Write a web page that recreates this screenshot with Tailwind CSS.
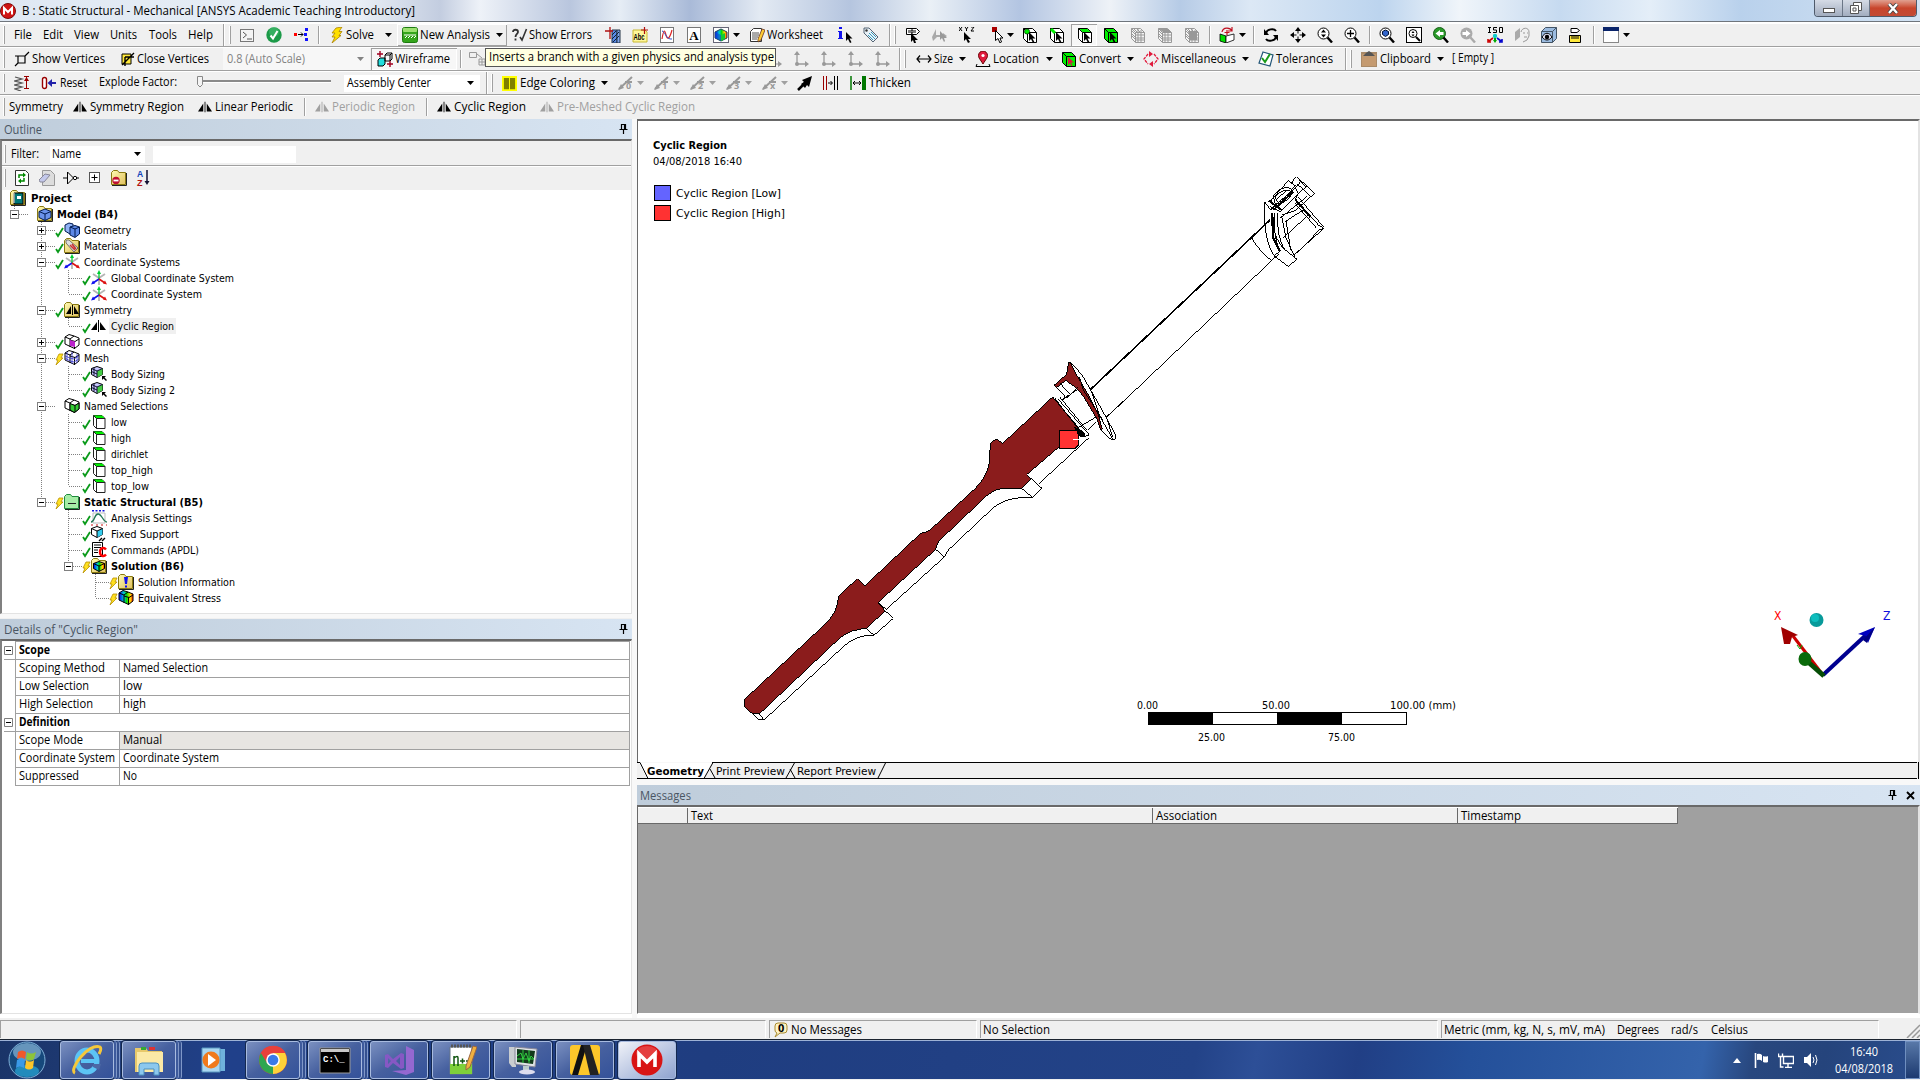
<!DOCTYPE html>
<html lang="en">
<head>
<meta charset="utf-8">
<title>B : Static Structural - Mechanical</title>
<script src="https://cdn.jsdelivr.net/npm/@tailwindcss/browser@4"></script>
</head>
<body class="w-[1920px] h-[1080px] overflow-hidden bg-[#f0f0f0] text-black font-['Open_Sans','Noto_Sans',sans-serif] text-[12px] leading-4">

<svg class="absolute size-0">
  <linearGradient id="gold" x1="0" y1="0" x2="1" y2="1"><stop offset="0" stop-color="#fffbb0"/><stop offset="1" stop-color="#e0c060"/></linearGradient>
  <linearGradient id="rain" x1="0" y1="0" x2="1" y2="0"><stop offset="0" stop-color="#00f"/><stop offset=".35" stop-color="#0cc"/><stop offset=".55" stop-color="#0d0"/><stop offset=".8" stop-color="#fd0"/><stop offset="1" stop-color="#f20"/></linearGradient>
  <symbol id="cur" viewBox="0 0 16 16"><path d="M8 5v9l2-2 2 4 1.500-.7-2-3.800h3z"/></symbol>
  <symbol id="m" viewBox="0 0 16 16"><circle cx="8" cy="8" r="7.500" fill="#d01515" stroke="#7c0d0d"/><path d="M4 11.500V5l4 4 4-4v6.500" fill="none" stroke="#fff" stroke-width="2"/></symbol>
  <symbol id="cmd" viewBox="0 0 16 16"><rect x="1.500" y="2.500" width="13" height="12" fill="#f4f4f4" stroke="#777"/><path d="M4 5l3.500 3L4 11M8 12h5" fill="none" stroke="#555"/></symbol>
  <symbol id="ok" viewBox="0 0 16 16"><circle cx="8" cy="8" r="7.700" fill="#1c9a48"/><circle cx="8" cy="5" r="5" fill="#4fc47a" opacity=".5"/><path d="M4.500 8.500l2.500 3L11.500 4" fill="none" stroke="#fff" stroke-width="2"/></symbol>
  <symbol id="nodes" viewBox="0 0 16 16"><path d="M1 6h3v3H1z" fill="#f00"/><path d="M5 7.500h5M8 5.500l2 2-2 2" stroke="#000" fill="none"/><path d="M12 1h3v3h-3zM11 6h3v3h-3zM12 11h3v3h-3z" fill="#11f"/></symbol>
  <symbol id="bolt" viewBox="0 0 16 16"><path d="M7 1l6-1-3 4.500h3l-3 4h2L3 16l3-6H3l3-4H3z" fill="#ffe000" stroke="#a88000" stroke-width=".8"/></symbol>
  <symbol id="newan" viewBox="0 0 16 16"><rect x=".5" y=".5" width="15" height="15" rx="2" fill="#34a51c" stroke="#1d7a10"/><rect x="1" y="1" width="14" height="4" rx="1" fill="#9be070"/><path d="M2 8h12" stroke="#fff"/><path d="M3 11l2-2M6 11l2-2M9 11l2-2M12 11l2-2" stroke="#fff"/></symbol>
  <symbol id="errs" viewBox="0 0 16 16"><path d="M1 5c0-3 5-3 5 0 0 2-2.500 2-2.500 5M3.500 11.500v2" fill="none" stroke="#333" stroke-width="1.800"/><path d="M8 10l2 3 4.500-11" fill="none" stroke="#333" stroke-width="1.600"/></symbol>
  <symbol id="sect" viewBox="0 0 16 16"><path d="M7 3h5v13H7z" fill="#5a8be8" stroke="#234"/><path d="M12 3h3v13h-3z" fill="#7fa6ee" stroke="#234"/><path d="M7 8l4-4M7 12l7-7M8 15l6-6" stroke="#123"/><path d="M0 4h8M5 0v12" stroke="#b01010" stroke-width="1.300"/></symbol>
  <symbol id="abc" viewBox="0 0 16 16"><path d="M1 3h12l2 2v10H1z" fill="#fff79a" stroke="#c8b830"/><text x="1.500" y="13" font-size="8.500" font-weight="700" textLength="11" font-family="Liberation Sans">Abc</text><path d="M9 3h7M12.500 0v7" stroke="#b01010" stroke-width="1.200"/></symbol>
  <symbol id="chart" viewBox="0 0 16 16"><rect x="1.500" y=".5" width="13" height="15" fill="#fff" stroke="#777"/><path d="M3 12C5 0 6 4 7 8s3 6 6-5" fill="none" stroke="#d22" stroke-width="1.200"/><path d="M3 4c3 0 4 9 10 8" fill="none" stroke="#35c"/></symbol>
  <symbol id="atext" viewBox="0 0 16 16"><rect x="1.500" y=".5" width="13" height="15" fill="#fff" stroke="#777"/><text x="8" y="13" text-anchor="middle" font-size="13" font-weight="700" font-family="Liberation Serif">A</text></symbol>
  <symbol id="color" viewBox="0 0 16 16"><rect x=".5" y=".5" width="15" height="15" fill="#fff" stroke="#667"/><path d="M8 2l6 3v6l-6 3-6-3V5z" fill="url(#rain)" stroke="#245"/><path d="M8 8v6l-6-3V5z" fill="#14c" opacity=".6"/><path d="M8 8v6l4-2V6z" fill="#1c3"/></symbol>
  <symbol id="sheet" viewBox="0 0 16 16"><path d="M1.500 4.500l3-3h8v13h-11z" fill="#fff" stroke="#333"/><path d="M3 6h7M3 8h7M3 10h6M3 12h5" stroke="#555"/><path d="M9 12l4-10 3 1-4 10-3 2z" fill="#fc3" stroke="#632" stroke-width=".8"/></symbol>
  <symbol id="info" viewBox="0 0 16 16"><path d="M2 0h3v2H2zM1 4h4v7h1v1H1v-1h1V5H1z" fill="#11e"/><use href="#cur" x="1" y="0"/></symbol>
  <symbol id="tag" viewBox="0 0 16 16"><path d="M1 1l5 0 9 9-5 5L1 6z" fill="#e8f0f6" stroke="#456" stroke-width=".9"/><path d="M6 6l6 6M8 5l5 5M5 8l5 5" stroke="#39b"/><circle cx="3.500" cy="3.500" r="1.200" fill="#333"/></symbol>
  <symbol id="lab" viewBox="0 0 16 16"><path d="M1.500 1.500h10l3 3-3 3h-10z" fill="#fff" stroke="#000"/><path d="M4 3v3M10 3v3M6 3h2v3H6z" stroke="#000" fill="none"/><path d="M6 6v9l2-2 1 3h2l-1-3h3z"/></symbol>
  <symbol id="gcur" viewBox="0 0 16 16"><path d="M0 10l4-8v6h7V6l4 3-4 3v-2H5l-4 4z" fill="#aaa"/><path d="M8 4v9l2-2 2 4 1-1-1-3h3z" fill="#999"/></symbol>
  <symbol id="xyz" viewBox="0 0 16 16"><path d="M0 0l3 4M3 0L0 4M6 0l1.500 2L9 0M7.500 2v2M12 0h3l-3 4h3" stroke="#000" fill="none"/><path d="M5 5v9l2-2 2 4 2-1-2-3h3z"/></symbol>
  <symbol id="rcur" viewBox="0 0 16 16"><path d="M1 0h5v5H1z" fill="#a00"/><path d="M4.500 3.500v10l2.500-2 2 4.500 1.500-1-1.500-4h3z" fill="#fff" stroke="#000"/></symbol>
  <symbol id="cube" viewBox="0 0 16 16"><path d="M1.500 1.500h9l4 4v10H5.500l-4-4z" fill="#fff" stroke="#000"/><path d="M1.500 1.500l4 4v10M5.500 5.500h9" stroke="#000" fill="none"/></symbol>
  <symbol id="cv" viewBox="0 0 16 16"><use href="#cube"/><circle cx="5" cy="4.500" r="2.600" fill="#0e0" stroke="#000" stroke-width=".6"/><use href="#cur" x="-1"/></symbol>
  <symbol id="ce" viewBox="0 0 16 16"><use href="#cube"/><path d="M2 2l4 4" stroke="#0e0" stroke-width="3"/><use href="#cur" x="-1"/></symbol>
  <symbol id="cf" viewBox="0 0 16 16"><use href="#cube"/><path d="M2.500 2h8l3 3H5.500z" fill="#0e0"/><use href="#cur" x="-1"/></symbol>
  <symbol id="cb" viewBox="0 0 16 16"><path d="M1.500 1.500h9l4 4v10H5.500l-4-4z" fill="#0e0" stroke="#000"/><path d="M1.500 1.500l4 4v10M5.500 5.500h9" stroke="#000" fill="none"/><use href="#cur" x="-1"/></symbol>
  <symbol id="cc" viewBox="0 0 16 16"><path d="M1.500 1.500h9l4 4v10H5.500l-4-4z" fill="#0e0" stroke="#000"/><path d="M1.500 1.500l4 4v10M5.500 5.500h9" stroke="#000" fill="none"/><path d="M7 6v8l2-2 1.500 3 1-.5-1.500-3h3z" fill="#e01040"/></symbol>
  <symbol id="gm" viewBox="0 0 16 16"><path d="M1.500 1.500h9l4 4v10H5.500l-4-4z" fill="#f4f4f4" stroke="#999"/><path d="M1.500 1.500l4 4v10M5.500 5.500h9M2 4l4 4h9M2 7l4 4h9M2 9l4 4h9M8 2v13M11 3v12M4 2l4 4M7 2l4 4" stroke="#999" fill="none"/></symbol>
  <symbol id="gm2" viewBox="0 0 16 16"><use href="#gm"/><path d="M2 2h9l3 3H6z" fill="#999"/></symbol>
  <symbol id="gm3" viewBox="0 0 16 16"><use href="#gm"/><path d="M4 4h9v9H6z" fill="#999"/></symbol>
  <symbol id="rcube" viewBox="0 0 16 16"><path d="M1 7l6 2v7l-6-2z" fill="#0d0" stroke="#000" stroke-width=".8"/><path d="M7 9l8-2v6l-8 3z" fill="#fff" stroke="#000" stroke-width=".8"/><path d="M3 5c1-5 8-5 10-1M13 0v4H9M8 3v5M5.500 5.500h5" stroke="#c01020" stroke-width="1.200" fill="none"/></symbol>
  <symbol id="rot" viewBox="0 0 16 16"><path d="M3 6c1-4 8-5 10-2M13 10c-1 4-8 5-10 2" stroke="#000" stroke-width="2" fill="none"/><path d="M1 2v6h5zM15 14V8h-5z"/></symbol>
  <symbol id="pan" viewBox="0 0 16 16"><path d="M8 3v3.500M8 9.500V13M3 8h3.500M9.500 8H13" stroke="#000"/><path d="M8 0l3 4H5zM8 16l3-4H5zM0 8l4-3v6zM16 8l-4-3v6z"/></symbol>
  <symbol id="lens" viewBox="0 0 16 16"><circle cx="6.500" cy="6.500" r="5.500" fill="#fff" stroke="#000"/><path d="M10.500 10.500l4.500 5" stroke="#000" stroke-width="2.400"/></symbol>
  <symbol id="z1" viewBox="0 0 16 16"><use href="#lens"/><path d="M6.500 2.500L9 5.500H4zM6.500 10.500L9 7.500H4z"/></symbol>
  <symbol id="z2" viewBox="0 0 16 16"><use href="#lens"/><path d="M3 6.500h7M6.500 3v7" stroke="#000" stroke-width="1.300"/></symbol>
  <symbol id="z3" viewBox="0 0 16 16"><use href="#lens"/><path d="M6.500 3l3 1.500v3l-3 2-3-2v-3z" fill="#36c" stroke="#013"/></symbol>
  <symbol id="z4" viewBox="0 0 16 16"><rect x=".5" y=".5" width="15" height="15" fill="#fff" stroke="#000"/><circle cx="7" cy="6.500" r="4" fill="none" stroke="#000"/><path d="M10 10l4 4" stroke="#000" stroke-width="2"/><path d="M7 4l1.500 2h-3zM7 9.500l1.500-2h-3z"/></symbol>
  <symbol id="z5" viewBox="0 0 16 16"><circle cx="6.500" cy="6.500" r="6" fill="#2a9a2a" stroke="#176017"/><path d="M10.500 10.500l4.500 5" stroke="#000" stroke-width="2.400"/><path d="M2.500 6.500L7 3v2h3.500v3H7v2z" fill="#fff"/></symbol>
  <symbol id="z6" viewBox="0 0 16 16"><circle cx="6.500" cy="6.500" r="6" fill="#aaa"/><path d="M10.500 10.500l4.500 5" stroke="#aaa" stroke-width="2.400"/><path d="M10.500 6.500L6 3v2H2.500v3H6v2z" fill="#fff"/></symbol>
  <symbol id="iso" viewBox="0 0 16 16"><path d="M1 .5h3M2.500 1v4M1 5.500h3M10 .500H6.500v2.500h3v2.500H6M12.500 .5h3v5h-3z" stroke="#000" fill="none"/><path d="M8 9v5" stroke="#0a0" stroke-width="2"/><circle cx="8" cy="9" r="2.200" fill="#1cc"/><path d="M2 14l4-3M1 12v3h3" stroke="#c00" stroke-width="1.600" fill="none"/><path d="M14 14l-4-3M15 12v3h-3" stroke="#00c" stroke-width="1.600" fill="none"/><path d="M6 13h4l-2 3z" fill="#0a0"/></symbol>
  <symbol id="face" viewBox="0 0 16 16"><path d="M1 14V5l5-4v9z" fill="#aaa"/><path d="M7 5c1-5 8-5 8 0v4l-2 4-4 2M9 6h2M13 6h1M10 10h3" fill="none" stroke="#999"/></symbol>
  <symbol id="eye" viewBox="0 0 16 16"><path d="M.5 4.500l4-4h11v11l-4 4H.5z" fill="#9bbbe0" stroke="#456"/><path d="M.5 4.500h11v11M11.500 4.500l4-4" fill="none" stroke="#456"/><path d="M1 10c3-5 7-5 10 0-3 4-7 4-10 0z" fill="#dde" stroke="#000"/><circle cx="6" cy="10" r="2.200"/></symbol>
  <symbol id="rule" viewBox="0 0 16 16"><path d="M4 1.500h6l2.500 2-2.500 2H4z" fill="#fff" stroke="#000"/><path d="M2.500 8.500h11v7h-11z" fill="#ffe93a" stroke="#000"/><path d="M5 9v3M7 9v3M9 9v3M11 9v3" stroke="#000"/></symbol>
  <symbol id="win" viewBox="0 0 16 16"><rect x=".5" y=".5" width="15" height="15" fill="#fff" stroke="#888"/><path d="M0 0h16v4H0z" fill="#0a246a"/></symbol>
  <symbol id="sv" viewBox="0 0 16 16"><path d="M4 5h7v7H4zM11 5l4-4M4 12l-3 3M4 5H1" fill="none" stroke="#000" stroke-width="1.200"/></symbol>
  <symbol id="clv" viewBox="0 0 16 16"><path d="M3 3h9v10H3z" fill="#ffe93a" stroke="#000"/><path d="M6 6h9M6 6v9M15 2L3 14" stroke="#000" stroke-width="1.400" fill="none"/></symbol>
  <symbol id="wire" viewBox="0 0 16 16"><path d="M1 9l2-2h5v6l-2 2H1z" fill="#2dd" stroke="#000"/><path d="M8 4l2-2h5v6l-2 2H8zM8 4h5v6M13 4l2-2" fill="none" stroke="#000"/><path d="M0 3h6M3 0v6M10 13h6M13 10v6" stroke="#a00020" stroke-width="1.400"/></symbol>
  <symbol id="gbox" viewBox="0 0 16 16"><path d="M.5 1.500h7v5h-7zM10 8h6v6h-6zM13 8v6M10 11h6M8 3l5 4" fill="none" stroke="#999"/></symbol>
  <symbol id="gax" viewBox="0 0 16 16"><path d="M4 2v11h9" fill="none" stroke="#999" stroke-width="1.300"/><path d="M4 0l3 4H1zM16 13l-4-3v6z" fill="#999"/><circle cx="4" cy="13" r="2" fill="#999"/></symbol>
  <symbol id="garr" viewBox="0 0 16 16"><path d="M9 13h5" stroke="#999"/><path d="M16 13l-4-3v6z" fill="#999"/></symbol>
  <symbol id="size" viewBox="0 0 16 16"><path d="M1 8h14M4 4.500L1 8l3 3.500M12 4.500L15 8l-3 3.500" fill="none" stroke="#000" stroke-width="1.200"/></symbol>
  <symbol id="loc" viewBox="0 0 16 16"><path d="M8 13C5 8 3.500 7 3.500 4.500a4.500 4.500 0 0 1 9 0C12.500 7 11 8 8 13z" fill="#e01a3c" stroke="#600"/><circle cx="8" cy="4.500" r="1.600" fill="#fff"/><path d="M2 13l-1 2.500h14L14 13" fill="none" stroke="#000"/></symbol>
  <symbol id="misc" viewBox="0 0 16 16"><path d="M5 3L1 8l4 5M11 3l4 5-4 5" fill="none" stroke="#e01a3c" stroke-width="1.300" stroke-dasharray="3 1"/><path d="M6 0l4 3-4 3zM10 10l-4 3 4 3z" fill="#e01a3c"/></symbol>
  <symbol id="tol" viewBox="0 0 16 16"><path d="M5 1l10 3-3 11L1 12z" fill="#fff" stroke="#257" stroke-width="1.200"/><path d="M4 7l3 4 5-8" fill="none" stroke="#1a9a1a" stroke-width="2"/></symbol>
  <symbol id="clip" viewBox="0 0 16 16"><path d="M0 1h16v15H0z" fill="#a98a68"/><path d="M1 3h14v12H1z" fill="#c49a70"/><path d="M2 5l3-3 3-2 3 2 3 3z" fill="#555"/></symbol>
  <symbol id="spring" viewBox="0 0 16 16"><path d="M1 2l7 2-7 2 7 2-7 2 7 2-7 2 6 2" fill="none" stroke="#555" stroke-width="1.300"/><path d="M12.500 2v11M10 1.500h5M10 13.500h5" stroke="#900"/><path d="M12.500 2l2.500 4h-5z" fill="#900"/></symbol>
  <symbol id="reset" viewBox="0 0 16 16"><rect x="1.500" y="2.500" width="4" height="11" rx="2" fill="#fff" stroke="#900" stroke-width="1.400"/><path d="M9 8h6" stroke="#22a" stroke-width="2"/><path d="M6.500 8L11 4v8z" fill="#22a"/></symbol>
  <symbol id="ec" viewBox="0 0 16 16"><path d="M0 0h16v16H0z" fill="#ff0"/><path d="M2 2h5.500v12H2zM8.500 2H14v12H8.500z" fill="#808000"/></symbol>
  <symbol id="sl" viewBox="0 0 16 16"><path d="M1 14L14 2" stroke="#999" stroke-width="2"/><path d="M0 15l6-2-3-4zM7 6h7v2H7z" fill="#999"/></symbol>
  <symbol id="pin2" viewBox="0 0 16 16"><path d="M1 15L9 7" stroke="#000" stroke-width="2.500"/><path d="M15 1L5 5l2 2-3 2 4 4 2-3 2 2z"/></symbol>
  <symbol id="vv" viewBox="0 0 16 16"><path d="M1.500 1v14M4.500 1v14" stroke="#900"/><path d="M6 8h4M8.500 6l2 2-2 2M12.500 1v14M15.500 1v14" stroke="#000" fill="none"/></symbol>
  <symbol id="thk" viewBox="0 0 16 16"><path d="M1 1v14" stroke="#070" stroke-width="1.500"/><path d="M12 1h4v14h-4z" fill="#070"/><path d="M3 8h8M5 6L3 8l2 2M9 6l2 2-2 2" stroke="#000" fill="none"/></symbol>
  <symbol id="sym" viewBox="0 0 16 16"><path d="M6 4v9H0zM10 4v9h6z" fill="currentColor"/><path d="M8 2v12" stroke="currentColor"/></symbol>
  <symbol id="refresh" viewBox="0 0 16 16"><path d="M1.500.500h10l3 3v12h-13z" fill="#fff" stroke="#333"/><path d="M5 8V5h5M10 8v3H5" fill="none" stroke="#080" stroke-width="1.500"/><path d="M9 2.500L12 5 9 7.500zM7 8.500L4 11l3 2.500z" fill="#080"/></symbol>
  <symbol id="erase" viewBox="0 0 16 16"><path d="M3.500.500h8l4 4v11h-12z" fill="#ddd" stroke="#999"/><path d="M0 10l6-6 5 1-6 7H1z" fill="#c3c8ea" stroke="#889"/></symbol>
  <symbol id="gate" viewBox="0 0 16 16"><path d="M0 8h4M13 8h3M4.500 2v12l6-6z" fill="none" stroke="#000"/><circle cx="12" cy="8" r="1.700" fill="#fff" stroke="#000"/></symbol>
  <symbol id="plus" viewBox="0 0 16 16"><rect x="3.500" y="2.500" width="10" height="10" fill="#fff" stroke="#555"/><path d="M5.500 7.500h6M8.500 4.500v6" stroke="#000"/></symbol>
  <symbol id="fold" viewBox="0 0 16 16"><path d="M.5 14.500v-12l2-2h4l1.500 2h6.500v12z" fill="url(#gold)" stroke="#8a7a10"/><path d="M1 15.500h14.500V3" stroke="#222" fill="none"/></symbol>
  <symbol id="fstop" viewBox="0 0 16 16"><use href="#fold"/><circle cx="5" cy="10.500" r="3.700" fill="#c01030"/><path d="M2.500 10.500h5" stroke="#fff" stroke-width="1.800"/></symbol>
  <symbol id="az" viewBox="0 0 16 16"><text x="1" y="7" font-size="8.500" font-weight="700" fill="#14b" font-family="Liberation Sans">A</text><text x="1" y="15.500" font-size="9" font-weight="700" fill="#b01010" font-family="Liberation Sans">Z</text><path d="M11 0v12" stroke="#113" stroke-width="1.500"/><path d="M8.500 11h5L11 15z" fill="#113"/></symbol>
  <symbol id="t-proj" viewBox="0 0 16 16"><use href="#fold"/><path d="M4 3h9v11H4z" fill="#077" stroke="#000"/><path d="M7 6h4v3H7z" fill="#fff"/><path d="M3 4h2M3 6h2M3 8h2M3 10h2M3 12h2" stroke="#fff"/></symbol>
  <symbol id="bc" viewBox="0 0 16 16"><path d="M8 3l6 2.500v6L8 14.500 2 11.500v-6z" fill="#6b93ea" stroke="#001a50"/><path d="M2 5.500L8 8l6-2.500M8 8v6.500" fill="none" stroke="#001a50"/></symbol>
  <symbol id="t-model" viewBox="0 0 16 16"><use href="#fold"/><use href="#bc"/></symbol>
  <symbol id="t-geo" viewBox="0 0 16 16"><path d="M1 3l4-2 4 1v8l-3 2-5-3z" fill="#8fb2f5" stroke="#001a50"/><path d="M6 5l5-1.500L15.500 5v7L11 15.500 6 13z" fill="#5d88e6" stroke="#001a50"/><path d="M6 5l5 2 4.500-2M11 7v8" fill="none" stroke="#001a50"/></symbol>
  <symbol id="t-mat" viewBox="0 0 16 16"><use href="#fold"/><path d="M2 2l3 0 9 8-4 4-8-9z" fill="#ddd" stroke="#444" stroke-width=".7"/><path d="M6 7l5 5M8 6l4 5" stroke="#c33" stroke-width="1.500"/></symbol>
  <symbol id="t-cs" viewBox="0 0 16 16"><path d="M8 8L2 4M8 8l6-4M8 8v7" stroke="#b5b5b5" stroke-width="1.800"/><path d="M8 9V2" stroke="#0c3" stroke-width="1.300"/><path d="M8 0l2 4H6z" fill="#0c3"/><path d="M8 9l-6 4" stroke="#11e" stroke-width="1.600"/><path d="M0 14.500l2-4 2 3z" fill="#11e"/><path d="M8 9l6 4" stroke="#d11" stroke-width="1.600"/><path d="M16 14.500l-2-4-2 3z" fill="#d11"/></symbol>
  <symbol id="t-symf" viewBox="0 0 16 16"><use href="#fold"/><path d="M7 4v8H2zM10 4v8h5zM8 3h1v10H8z"/></symbol>
  <symbol id="t-sym" viewBox="0 0 16 16"><path d="M6 4v8H0zM9 4v8h6z"/><path d="M7.500 2v12" stroke="#000"/></symbol>
  <symbol id="wc" viewBox="0 0 16 16"><path d="M1 3l4-2.500 5 1.500 5 2v7l-4.500 3.500L1 10z" fill="#fff" stroke="#000"/><path d="M1 3l5 2 4-3M6 5v8M6 6l5 1.500L15 5M10.500 7v8" fill="none" stroke="#000"/></symbol>
  <symbol id="t-con" viewBox="0 0 16 16"><use href="#wc"/><path d="M6 6l5 1.500V13L6 12z" fill="#b2c"/></symbol>
  <symbol id="t-mesh" viewBox="0 0 16 16"><use href="#wc"/><path d="M1 6l5 2 4 1 5-3M1 8l5 3 4 1 5-3M3 2v9M8 2v12M13 4v9" stroke="#33c" stroke-width=".8" fill="none"/></symbol>
  <symbol id="t-size" viewBox="0 0 16 16"><path d="M6 .5l5.500 2v6L6 11.500.500 8.500v-6z" fill="#c8c8ff" stroke="#000"/><path d="M6 5l5.500-2.500v6L6 11.500z" fill="#4c4"/><path d="M.5 2.500L6 5l5.500-2.500M6 5v6.500M.5 5.500L6 8M3 1.500v8" fill="none" stroke="#113"/><path d="M11 10h4l-1.500 1.500L16 14l-1 1-2.500-2.500L11 14z"/></symbol>
  <symbol id="t-ns" viewBox="0 0 16 16"><use href="#wc"/><path d="M6 5.500l5 2L15 5v6l-4.500 3.500L6 12z" fill="#3c3" stroke="#000"/><path d="M11 8v6" stroke="#000"/></symbol>
  <symbol id="t-face" viewBox="0 0 16 16"><path d="M2.500 1.500h8.500l3 3v10H5.500l-3-3z" fill="#fff" stroke="#222"/><path d="M2.500 1.500h8.500l3 3H5.500z" fill="#0e0"/><path d="M2.500 1.500l3 3v10M5.500 4.500h8.500" stroke="#222" fill="none"/></symbol>
  <symbol id="t-ss" viewBox="0 0 16 16"><path d="M.5 14.500v-12l2-2h4l1.500 2h6.500v12z" fill="#a6eda6" stroke="#1f8a3c"/><path d="M1 15.500h14.500V3M4 9.500h8" stroke="#222" fill="none"/></symbol>
  <symbol id="t-as" viewBox="0 0 16 16"><path d="M2 3h12v10H2z" fill="#fff" stroke="#bbb"/><path d="M0 12c4 0 3-8 7-8s5 8 9 8" fill="none" stroke="#275" stroke-width="1.300"/><path d="M1 .8h14" stroke="#11d" stroke-dasharray="2 1.500" stroke-width="1.500"/><path d="M0 15h16" stroke="#c11" stroke-dasharray="2 3"/></symbol>
  <symbol id="t-fix" viewBox="0 0 16 16"><path d="M6 .5l5.500 2v6L6 11.500.500 8.500v-6z" fill="#fff" stroke="#000"/><path d="M6 5l5.500-2.500v6L6 11.500z" fill="#3ce"/><path d="M.5 2.500L6 5l5.500-2.500M6 5v6.500" fill="none" stroke="#000"/><path d="M8 15l3-3M11 15l3-3" stroke="#000" stroke-width="1.400"/></symbol>
  <symbol id="t-cmd" viewBox="0 0 16 16"><path d="M1.500.500h10v14h-10z" fill="#fff" stroke="#000"/><path d="M3 3h7M3 5.500h7M3 8h4M3 10.500h4" stroke="#000"/><path d="M15 7.500c-2-2.500-6-2-6 2.500s4 5 6 2.500" fill="none" stroke="#f00" stroke-width="2.400"/></symbol>
  <symbol id="t-sol" viewBox="0 0 16 16"><use href="#fold"/><path d="M8 3.500l5.500 2v5L8 13.500 2.500 10.500v-5z" fill="url(#rain)" stroke="#000"/><path d="M2.500 5.500L8 8l5.500-2.500M8 8v5.500" fill="none" stroke="#000"/></symbol>
  <symbol id="t-inf" viewBox="0 0 16 16"><use href="#fold"/><path d="M6 3h4L9 10H7zM7 11.500h2v2H7z" fill="#11e"/></symbol>
  <symbol id="t-eq" viewBox="0 0 16 16"><path d="M1 3l4-2.500 5 1.500 5 2v7l-4.500 3.500L1 10z" fill="url(#rain)" stroke="#000"/><path d="M1 3l5 2 4-3M6 5v8M6 6l5 1.500L15 5M10.500 7v8" fill="none" stroke="#000"/></symbol>
  <symbol id="tack" viewBox="0 0 10 12"><path d="M2.500 1.500h4v5h-4zM5.500 1.500v5M.5 6.500h8M4.500 7v4" fill="none" stroke="#000" stroke-width="1.200"/></symbol>
</svg>

<div class="flex flex-col h-full">
  <!-- title bar -->
  <header class="h-[23px] flex-none flex items-start justify-between border-b border-b-white bg-[linear-gradient(90deg,#dfe8f3_0,#e9eff6_360px,#c3cde0_440px,#eef2f8_480px,#b9c6de_570px,#e6edf5_620px,#a9bad8_690px,#e3eaf3_760px,#b5c5df_850px,#eaf0f6_930px,#b3c5e2_1020px,#eef2f7_1110px,#b6cbe6_1180px,#dce8f5_1250px,#bcd4ee_1380px,#f0f5fa_1460px,#c6daf0_1560px,#e4eef8_1650px,#b9d1ec_1740px,#d3e3f3_100%)] shadow-[inset_0_-1px_0_#6f757c]">
    <div class="flex items-center h-[22px]">
      <svg class="size-4"><use href="#m"/></svg>
      <span class="ml-[6px]" data-w="393">B : Static Structural - Mechanical [ANSYS Academic Teaching Introductory]</span>
    </div>
    <div class="flex h-[17px] mr-[3px] rounded-b border border-t-0 border-[#4f5a6a] overflow-hidden">
      <div class="w-[28px] bg-linear-to-b from-[#d5dbe6] to-[#a2adbf] flex items-center justify-center border-r border-[#6b7687]"><i class="w-3 h-[5px] bg-white border border-[#555] mt-1"></i></div>
      <div class="w-[27px] bg-linear-to-b from-[#d5dbe6] to-[#a2adbf] flex items-center justify-center border-r border-[#6b7687]"><svg width="12" height="12" fill="#fff" stroke="#555"><path d="M3.500.500h8v8h-8z"/><path d="M.5 3.500h8v8h-8zM3 6h3v3H3z"/></svg></div>
      <div class="w-[46px] bg-linear-to-b from-[#e0a090] via-[#c8452c] to-[#c24a34] flex items-center justify-center"><svg width="12" height="11"><path d="M2 1l8 9M10 1L2 10" stroke="#444" stroke-width="4"/><path d="M2 1l8 9M10 1L2 10" stroke="#fff" stroke-width="2.400"/></svg></div>
    </div>
  </header>

  <!-- toolbars -->
  <nav id="bar1" class="h-6 flex-none flex items-center border-t border-t-white border-b border-b-[#a0a0a0]"></nav>
  <nav id="bar2" class="relative h-6 flex-none flex items-center border-t border-t-white border-b border-b-[#a0a0a0]"></nav>
  <nav id="bar3" class="h-6 flex-none flex items-center border-t border-t-white border-b border-b-[#a0a0a0]"></nav>
  <nav id="bar4" class="h-6 flex-none flex items-center border-t border-t-white pb-px"></nav>

  <main class="flex h-[899px] flex-none">
    <!-- left column -->
    <div class="w-[632px] flex-none flex flex-col">
      <div class="h-5 flex-none flex items-end justify-between pb-px pl-1 pr-[3px] bg-linear-to-r from-[#bfcddb] to-[#d7e4f2] text-[#4a5563]">
        <span data-w="38">Outline</span><svg class="w-[10px] h-3 mb-[3px]"><use href="#tack"/></svg>
      </div>
      <section class="h-[475px] flex-none border-t-2 border-t-[#696969] border-l-2 border-l-[#808080] border-r border-b border-[#e3e3e3] bg-white flex flex-col">
        <div id="filter" class="h-[25px] flex-none flex items-center pt-[2px] bg-[#f0f0f0] border-b border-[#a0a0a0]"></div>
        <div id="otools" class="h-6 flex-none flex items-center pb-px bg-[#f0f0f0] border-t border-white"></div>
        <div id="tree" class="flex flex-col font-['DejaVu_Sans_Condensed','Noto_Sans',sans-serif] text-[11px]"></div>
      </section>
      <div class="h-1 flex-none bg-[#f8f8f8]"></div>
      <div class="h-5 flex-none flex items-end justify-between pb-px mt-px pl-1 pr-[3px] bg-linear-to-r from-[#bfcddb] to-[#d7e4f2] text-[#4a5563]">
        <span data-w="134">Details of "Cyclic Region"</span><svg class="w-[10px] h-3 mb-[3px]"><use href="#tack"/></svg>
      </div>
      <section class="grow border-t-2 border-t-[#696969] border-l-2 border-l-[#808080] border-r border-b border-[#e3e3e3] bg-white">
        <div id="details" class="ml-[13px] mr-px border border-[#a0a0a0] border-b-0"></div>
      </section>
      <div class="h-1 flex-none bg-white"></div>
    </div>
    <div class="w-[5px] flex-none bg-[#f8f8f8]"></div>
    <!-- right column -->
    <div class="grow flex flex-col">
      <section class="h-[643px] flex-none bg-white border-t-2 border-t-[#696969] border-l border-l-[#696969] border-r-2 border-r-[#e3e3e3]">
        <svg id="view" viewBox="638 121 1280 641" width="1280" height="641" shape-rendering="crispEdges" fill="none" stroke="#000" stroke-width="1" font-family="DejaVu Sans Condensed, Noto Sans, sans-serif" font-size="11">
          <g fill="#000" stroke="none" shape-rendering="auto">
            <text x="653" y="149" font-weight="700" textLength="74">Cyclic Region</text>
            <text x="653" y="165" textLength="89">04/08/2018 16:40</text>
            <text x="676" y="197" textLength="105">Cyclic Region [Low]</text>
            <text x="676" y="217" textLength="109">Cyclic Region [High]</text>
            <text x="1137" y="709" textLength="21">0.00</text><text x="1262" y="709" textLength="28">50.00</text><text x="1390" y="709" textLength="66">100.00 (mm)</text>
            <text x="1198" y="741" textLength="27">25.00</text><text x="1328" y="741" textLength="27">75.00</text>
          </g>
          <path d="M654.500 185.500h16v15h-16z" fill="#6464ff"/><path d="M654.500 205.500h16v15h-16z" fill="#ff3232"/>
          <path d="M1148.500 712.500h258v12h-258z" fill="#fff"/><path d="M1148 712h65v13h-65zM1277 712h65v13h-65z" fill="#000" stroke="none"/>
          <!-- hub and lower blade -->
          <g transform="translate(730 340) scale(.33333)" stroke-width="3">
            <path fill="#8b1c1c" d="M968 171L1045 262L1040 270L988 320L890 404L902 417L875 445H822C800 447 785 455 767 470L625 605L617 628L444 788L465 812L410 866C370 866 345 880 320 903L88 1122H68L44 1100V1078L290 848C315 822 322 800 326 768L382 716L404 738L572 580C585 578 592 575 600 570L735 446C762 418 779 390 779 350L781 312C785 302 792 299 804 299L817 311Z"/>
            <path d="M1078 292L928 430M890 404L936 445L908 473C850 470 820 480 788 505L655 630L643 651L469 808L444 788M465 812L490 835L432 886C390 886 370 895 340 920L102 1140H88L68 1122M88 1122L102 1140M410 866L432 886M875 445L908 473M617 628L643 651"/>
            <path fill="#8b1c1c" d="M1016 65L1022 70L1040 105L1075 165L1105 225L1117 268L1112 270L1100 235L1070 185C1055 160 1040 140 1025 135L1008 120L980 143L972 136L1010 103Z"/>
            <path d="M1020 66L1055 103L1085 155L1130 235L1157 285L1155 298L1145 300L1112 270M1085 155L1110 230L1150 300M1130 235L1148 290M1048 110L1060 150L1118 240M980 143L1010 175L1045 140M990 130L1020 162M1000 178L1040 150M985 178L1078 285L1062 290L975 175M990 172L1070 270M1045 262L1097 232M1075 270L1100 245M980 185L1065 290M995 180L1015 165"/>
            <path d="M1080 150L1200 36M1128 232L1200 165"/>
            <path d="M1033 262L1060 275L1066 290L1050 288Z" fill="#000"/>
            <path d="M989 271H1042L1046 290V315L1036 325H989Z" fill="#ff3232" stroke-width="4"/>
            <path d="M1028 298H1062" stroke="#fff" stroke-width="4"/>
          </g>
          <!-- upper blade and tip -->
          <g transform="translate(1040 160) scale(.33333)" stroke-width="3">
            <path d="M150 690L690 180" stroke-width="5"/><path d="M202 770L716 282"/>
            <path d="M636 235C650 262 670 280 692 300M674 125L692 150L728 115M674 125V185C678 240 690 270 705 290L746 320L770 297L730 265C710 240 700 220 697 165M690 125L745 62L770 80L690 150M756 65L770 50L824 100L765 152L725 165M690 140L720 155L800 78M770 50L800 85M852 205L762 285M835 195L852 205L838 210L770 280M835 195L765 115M705 160C700 200 705 240 720 275L705 285M712 160C712 210 720 250 735 270M725 168L738 235L765 290M735 185L790 150M728 235L805 165M738 180L752 270M700 110C710 85 745 75 755 90C765 105 725 140 705 130ZM706 112C716 94 742 84 750 94C756 106 725 130 712 126ZM712 115L745 88M718 125L752 98M756 65L775 100L765 120"/>
            <path d="M695 160L700 235L720 275M686 122L725 150M700 150L760 95M765 118L812 172" stroke-width="6"/>
            <path d="M765 130L830 205M775 112L850 200M745 62L765 78L752 90M700 170L705 220M770 70L812 110M785 62L745 105M720 175L800 110"/>
          </g>
          <!-- orientation triad -->
          <g shape-rendering="auto" stroke="none">
            <text x="1774" y="620" fill="#f00" font-size="12">X</text><text x="1883" y="620" fill="#11d" font-size="12">Z</text>
            <circle cx="1816.500" cy="620" r="7" fill="#089a9a"/><circle cx="1815" cy="618" r="4" fill="#1cc" opacity=".7"/>
            <path d="M1823 675L1793 636" stroke="#c00" stroke-width="3"/><path d="M1781 627l17 8-6 2-2 7-6 0z" fill="#a00000"/>
            <path d="M1823 675L1866 635" stroke="#000090" stroke-width="4"/><path d="M1875 627l-17 7 8 2 2 7z" fill="#0000c0"/><path d="M1875 627l-12 13 4 3z" fill="#000080"/>
            <path d="M1824 676L1807 661" stroke="#064d06" stroke-width="5"/><ellipse cx="1805" cy="659" rx="6.500" ry="7" fill="#0a6a0a"/><path d="M1797 645l3 4 2-4" stroke="#0a0" fill="none"/>
          </g>
        </svg>
      </section>
      <div class="h-[17px] flex-none border-r border-black mr-px">
        <svg width="1280" height="17" viewBox="638 762 1280 17" font-family="DejaVu Sans Condensed, Noto Sans, sans-serif" font-size="11">
          <path d="M640 762.500L648 778.500H704L713 762.500" fill="#fff"/>
          <path d="M638 762.500h3M713 762.500H1918M638 778.500H1918M641 762.500l8 16M705 778.500l9-16M711 769l5 9M787 778l9-16M791 769l5 9M879 778l8-16" fill="none" stroke="#000"/>
          <text x="648" y="775" font-weight="700" textLength="57">Geometry</text><text x="717" y="775" textLength="69">Print Preview</text><text x="798" y="775" textLength="79">Report Preview</text>
        </svg>
      </div>
      <div class="h-[6px] flex-none bg-[#f8f8f8]"></div>
      <div class="h-5 flex-none flex items-end pb-px pl-[3px] pr-[5px] bg-linear-to-r from-[#bfcddb] to-[#d7e4f2] text-[#4a5563]">
        <span class="grow"><span data-w="51">Messages</span></span><svg class="w-[10px] h-3 mr-2 mb-[3px]"><use href="#tack"/></svg><svg class="mb-1" width="9" height="9"><path d="M1 1l7 7M8 1L1 8" stroke="#000" stroke-width="1.800"/></svg>
      </div>
      <section class="grow bg-[#a0a0a0] border-t-2 border-l border-t-[#696969] border-l-[#696969] border-r-2 border-r-[#e3e3e3] border-b border-b-white">
        <div class="flex h-[17px] bg-[#f0f0f0] w-[1040px] border-t border-t-white">
          <div class="w-[50px] border-r border-b border-[#696969]"></div>
          <div class="w-[465px] border-r border-b border-[#696969] pl-[3px]"><span data-w="22">Text</span></div>
          <div class="w-[305px] border-r border-b border-[#696969] pl-[3px]"><span data-w="61">Association</span></div>
          <div class="w-[220px] border-r border-b border-[#696969] pl-[3px]"><span data-w="60">Timestamp</span></div>
        </div>
      </section>
      <div class="h-1 flex-none bg-white"></div>
    </div>
  </main>

  <!-- status bar -->
  <footer class="h-[22px] flex-none flex gap-[3px] pt-[2px] pb-px border-b border-[#1b2430]">
    <div class="w-[517px] border-t border-l border-[#a0a0a0] border-r border-r-white"></div>
    <div class="w-[246px] border-t border-l border-[#a0a0a0] border-r border-r-white"></div>
    <div class="w-[208px] border-t border-l border-[#a0a0a0] border-r border-r-white flex items-center pl-[2px]">
      <svg width="16" height="16"><path d="M6 1h6a3 3 0 0 1 3 3v4a3 3 0 0 1-3 3H8l-5 4 2-4a3 3 0 0 1-2-3V4a3 3 0 0 1 3-3z" fill="#fff3c4" stroke="#a98b30"/><text x="6" y="10" font-size="11" font-weight="700" font-family="Open Sans">0</text></svg>
      <span class="ml-[3px]" data-w="71">No Messages</span>
    </div>
    <div class="w-[458px] border-t border-l border-[#a0a0a0] border-r border-r-white flex items-center pl-[2px]"><span data-w="67">No Selection</span></div>
    <div id="units" class="w-[438px] border-t border-l border-[#a0a0a0] border-r border-r-white flex items-center"></div>
    <div class="grow flex items-end justify-end"><svg width="14" height="14"><path d="M1 14L14 1M6 14l8-8M11 14l3-3" stroke="#999" stroke-width="1.500"/></svg></div>
  </footer>

  <!-- taskbar -->
  <div id="task" class="h-[39px] flex-none flex items-center border-t border-[#9db2d6] text-white bg-[linear-gradient(100deg,#1a3468_0,#203c78_120px,#20408a_230px,#1f3d80_700px,#234388_1180px,#2d4f97_1240px,#213f85_1340px,#24509a_1450px,#3463ab_1680px,#28477e_1730px,#25447c_1800px,#2a4d8d_1900px)]"></div>
</div>

<script>
// Toolbar items: each has a start x and a width, and a row turns the distance between neighbours into margins.
const T = (x, w, s, c = '') => ({x, w, h: `<span class="${c}" data-w="${w}">${s}</span>`});
const I = (x, id, c = 'size-4', w = 16) => ({x, w, h: `<svg class="${c}"><use href="#${id}"/></svg>`});
const A = (x, col = '#000') => ({x, w: 7, h: `<svg width="7" height="4"><path d="M0 0h7L3.500 4z" fill="${col}"/></svg>`});
const S = x => ({x, w: 2, h: '<div class="w-[2px] h-[18px] bg-[#a0a0a0] border-r border-white"></div>'});
const E = x => ({x, w: 2, h: '<div class="w-[2px] h-[22px] bg-[#a0a0a0] border-r border-white"></div>'});
const G = x => ({x, w: 2, h: '<div class="w-[2px] h-[18px] bg-[#a0a0a0] border-l border-white"></div>'});
const row = (items, at = 0) => items.map(o => {
  const m = o.x - at; at = o.x + o.w;
  return `<div class="flex-none flex items-center" style="margin-left:${m}px;width:${o.w}px">${o.h}</div>`;
}).join('');
const B = (x, w, c, items) => ({x, w, h: `<div class="flex items-center w-full ${c}">${row(items, x)}</div>`});
const put = (id, items, at) => document.getElementById(id).innerHTML = row(items, at);
const down = 'h-[22px] shadow-[inset_1px_1px_0_#a0a0a0,inset_-1px_-1px_0_#fff] bg-[#f7f7f7]';
const up = 'h-[22px] shadow-[inset_1px_1px_0_#fff,inset_-1px_-1px_0_#a0a0a0]';
const gray = 'text-[#a0a0a0]';

put('bar1', [G(3), T(14,18,'File'), T(43,20,'Edit'), T(74,25,'View'), T(110,27,'Units'), T(149,28,'Tools'), T(188,25,'Help'), E(223), G(229),
  I(239,'cmd'), I(266,'ok'), I(293,'nodes'), S(318), I(329,'bolt'), T(346,28,'Solve'), A(385),
  B(397,110,up,[I(402,'newan'), T(420,70,'New Analysis'), A(496)]), I(512,'errs'), T(529,63,'Show Errors'),
  I(605,'sect'), I(632,'abc'), I(659,'chart'), I(686,'atext'), I(713,'color'), A(733), I(749,'sheet'), T(767,56,'Worksheet'), I(837,'info'), I(863,'tag'), E(889), G(894),
  I(905,'lab'), I(932,'gcur'), I(959,'xyz'), I(991,'rcur'), A(1007), I(1022,'cv'), I(1049,'ce'), B(1071,26,down,[I(1077,'cf')]), I(1103,'cb'), I(1130,'gm'), I(1157,'gm2'), I(1184,'gm3'), S(1209),
  I(1219,'rcube'), A(1239), S(1253), I(1263,'rot'), I(1290,'pan'), I(1317,'z1'), I(1344,'z2'), S(1369), I(1379,'z3'), I(1406,'z4'), I(1433,'z5'), I(1460,'z6'), I(1487,'iso'), I(1514,'face'), I(1541,'eye'), I(1567,'rule'), S(1593), I(1603,'win'), A(1623)]);
put('bar2', [G(3), I(14,'sv'), T(32,73,'Show Vertices'), I(119,'clv'), T(137,72,'Close Vertices'),
  B(223,147,'h-[22px] bg-[#f7f7f7]',[T(227,78,'0.8 (Auto Scale)','text-[#838383]'), A(357,'#838383')]),
  B(371,86,down,[I(377,'wire'), T(395,55,'Wireframe')]), S(460), I(469,'gbox'), I(766,'garr'), I(793,'gax'), I(820,'gax'), I(847,'gax'), I(874,'gax'), E(899), G(904),
  I(916,'size'), T(934,19,'Size'), A(959), I(975,'loc'), T(993,46,'Location'), A(1046), I(1061,'cc'), T(1079,42,'Convert'), A(1127), I(1143,'misc'), T(1161,75,'Miscellaneous'), A(1242), I(1258,'tol'), T(1276,57,'Tolerances'), E(1345), G(1350),
  I(1361,'clip'), T(1380,51,'Clipboard'), A(1437), T(1452,42,'[ Empty ]','pb-[3px]')]);
document.getElementById('bar2').insertAdjacentHTML('beforeend', '<div class="absolute left-[485px] top-0 h-[19px] w-[291px] border border-[#555] bg-[#ffffe1] pl-[3px]"><span data-w="285">Inserts a branch with a given physics and analysis type</span></div>');
const edge = (x, n) => [{x, w: 16, h: `<svg class="size-4 overflow-visible"><use href="#sl"/><text x="8" y="14" font-size="9" font-weight="700" fill="#999">${n}</text></svg>`}, A(x + 19, '#a0a0a0')];
put('bar3', [G(3), I(14,'spring'), I(41,'reset'), T(60,27,'Reset'), T(99,78,'Explode Factor:','pb-[3px]'),
  {x: 197, w: 134, h: '<svg width="134" height="16"><path d="M4 5h130v2H4z" fill="#8a8a8a"/><path d="M4 7.500h130" stroke="#fff"/><path d="M.5 1.500h5v8L3 12 .5 9.500z" fill="#f4f4f4" stroke="#888"/></svg>'},
  B(344,136,'h-[17px] bg-white',[T(347,84,'Assembly Center'), A(467)]), E(486), G(491),
  I(502,'ec','size-[15px]'), T(520,75,'Edge Coloring'), A(601), ...edge(618,0), ...edge(654,1), ...edge(690,2), ...edge(726,3), ...edge(762,'x'), I(797,'pin2'), I(822,'vv'), I(850,'thk'), T(869,42,'Thicken')]);
put('bar4', [G(3), T(9,54,'Symmetry'), I(73,'sym','size-[14px]'), T(90,94,'Symmetry Region'), I(198,'sym','size-[14px]'), T(215,78,'Linear Periodic'), S(304),
  I(315,'sym','size-[14px] text-[#a0a0a0]'), T(332,83,'Periodic Region',gray), S(426), I(437,'sym','size-[14px]'), T(454,72,'Cyclic Region'), I(540,'sym','size-[14px] text-[#a0a0a0]'), T(557,138,'Pre-Meshed Cyclic Region',gray)]);
put('filter', [G(4), T(11,28,'Filter:'), B(50,95,'h-[17px] bg-white',[T(52,29,'Name'), A(134)]), {x: 153, w: 143, h: '<div class="bg-white h-[17px] w-full"></div>'}], 2);
put('otools', [G(4), I(14,'refresh'), I(39,'erase'), I(63,'gate'), I(86,'plus'), I(111,'fstop'), I(136,'az')], 2);
put('units', [T(1444,161,'Metric (mm, kg, N, s, mV, mA)'), T(1617,42,'Degrees'), T(1671,27,'rad/s'), T(1711,37,'Celsius')], 1442);

// Outline tree: branch cells, label, label width, icon, state (c = up to date, b = needs solving)
const tree = [
  ['_','Model (B4)',61,'model','',1], [' +','Geometry',47,'geo','c'], [' +','Materials',43,'mat','c'], [' -','Coordinate Systems',96,'cs','c'],
  [' |T','Global Coordinate System',123,'cs','c'], [' |L','Coordinate System',91,'cs','c'], [' -','Symmetry',48,'symf','c'], [' |L','Cyclic Region',63,'sym','c'],
  [' +','Connections',59,'con','c'], [' -','Mesh',25,'mesh','b'], [' |T','Body Sizing',54,'size','c'], [' |L','Body Sizing 2',64,'size','c'],
  [' -','Named Selections',84,'ns',''], [' |T','low',16,'face','c'], [' |T','high',20,'face','c'], [' |T','dirichlet',37,'face','c'], [' |T','top_high',42,'face','c'], [' |L','top_low',38,'face','c'],
  [' _','Static Structural (B5)',119,'ss','b',1], ['  T','Analysis Settings',81,'as','c'], ['  T','Fixed Support',68,'fix','c'], ['  T','Commands (APDL)',88,'cmd','c'],
  ['  _','Solution (B6)',73,'sol','b',1], ['   T','Solution Information',97,'inf','b'], ['   L','Equivalent Stress',83,'eq','b']];
const cell = ch => {
  let s = '';
  if ('|T+-'.includes(ch)) s += '<path d="M13.500 0v16"/>';
  if ('L_'.includes(ch)) s += '<path d="M13.500 0v8"/>';
  if ('TL+-_'.includes(ch)) s += '<path d="M14 8.500h13"/>';
  s = `<g stroke="#808080" stroke-dasharray="1 1">${s}</g>`;
  if ('+-_'.includes(ch)) s += `<rect x="9.500" y="4.500" width="8" height="8" fill="#fff" stroke="#808080"/><path d="M11 8.500h5${ch === '+' ? 'M13.500 6v5' : ''}" stroke="#000"/>`;
  return `<svg class="w-[27px] h-4 flex-none">${s}</svg>`;
};
const state = {c: '<path d="M1 11l2 3 5-8" fill="none" stroke="#0a9a1a" stroke-width="1.800"/>', b: '<path d="M4 4h4L6 8h2l-7 7 2-5H1z" fill="#ffe020" stroke="#b89000" stroke-width=".8"/>', '': ''};
document.getElementById('tree').innerHTML =
  '<div class="flex h-4 items-center pl-2"><svg class="size-4"><use href="#t-proj"/></svg><span class="font-bold ml-[5px]" data-w="41">Project</span></div>' +
  tree.map(([p, s, w, ic, st, b]) => `<div class="flex h-4 items-center -ml-px">${[...p].map(cell).join('')}<svg class="w-[9px] h-4 flex-none">${state[st]}</svg><svg class="size-4 flex-none"><use href="#t-${ic}"/></svg><span class="ml-[2px] px-[2px] ${b ? 'font-bold' : ''} ${s === 'Cyclic Region' ? 'bg-[#f0f0f0]' : ''}"><span data-w="${w}">${s}</span></span></div>`).join('');

// Details grid
const det = [['Scope',31], ['Scoping Method',86,'Named Selection',85], ['Low Selection',70,'low',19], ['High Selection',74,'high',23], ['Definition',51], ['Scope Mode',64,'Manual',39], ['Coordinate System',96,'Coordinate System',96], ['Suppressed',60,'No',14]];
document.getElementById('details').innerHTML = det.map(([a, w, v, vw]) => v
  ? `<div class="flex h-[18px] border-b border-[#a0a0a0]"><div class="w-[104px] flex-none pl-[3px] border-r border-[#a0a0a0]"><span data-w="${w}">${a}</span></div><div class="grow pl-[3px] ${v === 'Manual' ? 'bg-[#e7e5e2]' : ''}"><span data-w="${vw}">${v}</span></div></div>`
  : `<div class="flex items-center h-[18px] border-b border-[#a0a0a0] font-bold -ml-[12px]"><svg width="9" height="9"><path d="M.5.500h8v8h-8z" fill="#fff" stroke="#808080"/><path d="M2 4.500h5" stroke="#000"/></svg><div class="ml-[2px] pl-[3px] h-[18px] border-l border-[#a0a0a0]"><span data-w="${w}">${a}</span></div></div>`).join('');

// Taskbar
const icons = {
  ie: '<ellipse cx="16" cy="17" rx="10" ry="11" fill="none" stroke="#5cc4f5" stroke-width="5"/><path d="M10 17h15" stroke="#5cc4f5" stroke-width="4"/><path d="M22 20h8l-2 6-6-3z" fill="#4c68a5"/><path d="M4 29C-3 26 18-2 29 3c2 2 0 5-1 7" fill="none" stroke="#f5c83a" stroke-width="3"/>',
  files: '<path d="M2 4h11l2 3h14v21H2z" fill="#e8c96a"/><path d="M4 8h26v20H4z" fill="#fbe9a6"/><path d="M16 3h6v3h-6z" fill="#d33"/><path d="M8 3h5v3H8z" fill="#3a3"/><path d="M6 31v-9q0-3 3-3h14q3 0 3 3v9h-5v-6H11v6z" fill="#8cc8ee" stroke="#4a90c0"/>',
  wmp: '<path d="M10 5h17v22H10z" fill="#6fb2dc"/><path d="M4 4h18v24H4z" fill="#a9d6f0" stroke="#5898c0"/><circle cx="13" cy="16" r="8.500" fill="#f07a1c"/><path d="M10 10l8 6-8 6z" fill="#fff"/>',
  chrome: '<circle cx="16" cy="16" r="14" fill="#e8403a"/><path d="M16 16L3.900 9A14 14 0 0 0 16 30l6-10z" fill="#2ea650"/><path d="M16 16l0 14a14 14 0 0 0 12-21H16z" fill="#fdd23a"/><path d="M16 9h12.500A14 14 0 0 0 4 9l6 10z" fill="#e8403a"/><circle cx="16" cy="16" r="6.800" fill="#fff"/><circle cx="16" cy="16" r="5.300" fill="#3a7ae8"/>',
  cmd: '<path d="M1 4h30v25H1z" fill="#000" stroke="#999"/><path d="M2 5h28v3H2z" fill="#c8c8c8"/><text x="4" y="18" fill="#fff" font-size="9" font-family="Liberation Mono" font-weight="700">C:\\_</text>',
  vs: '<path d="M23 2l8 4v22l-8 3L9 27l14-1z" fill="#9468d0"/><path d="M2 11l3-1 5 5 8-6 3 1v14l-3 1-8-6-5 5-3-1zM17 13l-4 4 4 4zM5 14v6l3-3z" fill="#8658c4" fill-rule="evenodd"/>',
  npp: '<path d="M5 3h22v27H5z" fill="#fff" stroke="#678"/><path d="M5 20h22v10H5z" fill="#7ed03a"/><path d="M6 2h20" stroke="#555" stroke-width="3" stroke-dasharray="2 1"/><path d="M9 12v10M9 14q4-3 4 0v8M15 17h5M17.500 14.500v5M21 17h4" stroke="#151" stroke-width="1.500" fill="none"/><path d="M21 22L28 2l4 1-7 20-4 3z" fill="#f0b040" stroke="#964"/>',
  mon: '<path d="M2 3h7v20H5L2 19z" fill="#c9cdd0"/><path d="M8 3l22 2-2 18-20-3z" fill="#dfe3e6" stroke="#889"/><path d="M10 5l18 2-2 13-16-2z" fill="#123a1c"/><path d="M10 12l4-3 2 6 3-6 3 8 2-5 3 3M10 15h17M16 6v13M22 6v13" stroke="#3d4" fill="none" stroke-width=".9"/><path d="M16 22h6v5h-6z" fill="#bcc"/><ellipse cx="20" cy="28" rx="8" ry="2.500" fill="#dde"/>',
  ansys: '<rect x="1" y="1" width="30" height="30" rx="3" fill="#fcc62a"/><path d="M12 1h6l-9 30H3z" fill="#111"/><path d="M14 1h7l9 30H21z" fill="#222"/>',
  mm: '<ellipse cx="16" cy="16" rx="15.500" ry="15.500" fill="#d81414"/><ellipse cx="16" cy="9" rx="11" ry="7" fill="#f26a6a" opacity=".5"/><path d="M8 23V10l8 8 8-8v13" fill="none" stroke="#fff" stroke-width="3.600"/>'
};
const pic = k => `<svg width="32" height="32" viewBox="0 0 32 32">${icons[k]}</svg>`;
const btn = (x, k, stack, on) => ({x, w: 60, h: `<div class="flex h-[38px] w-[60px]"><div class="${stack ? 'w-[54px]' : 'w-[58px]'} rounded-[3px] border border-[#a8bbdf] flex items-center justify-center shadow-[0_0_0_1px_#14284f] ${on ? 'bg-linear-to-br from-[#f0f2f8] to-[#8fa3cf]' : 'bg-linear-to-br from-[#7b90c0] via-[#46609f] to-[#34529a]'}">${pic(k)}</div>${stack ? '<div class="w-[3px] rounded-r border-r border-[#7f97c8] bg-[#3d5a9c]"></div><div class="w-[3px] rounded-r border-r border-[#7f97c8] bg-[#34508f]"></div>' : ''}</div>`});
put('task', [
  {x: 8, w: 38, h: '<svg width="38" height="38" viewBox="0 0 38 38"><circle cx="19" cy="19" r="18" fill="#16497c" stroke="#7fb0d8"/><ellipse cx="19" cy="11" rx="14" ry="9" fill="#9cc8e8" opacity=".6"/><ellipse cx="19" cy="30" rx="12" ry="6" fill="#2bb8e8" opacity=".6"/><path d="M10 11q4-3 8 0l-1 7q-4-3-8 0z" fill="#f0582a"/><path d="M19 11q4 3 9 0l-2 7q-4 3-8 0z" fill="#8cc43a"/><path d="M9 19q4-3 8 0l-1 8q-4-3-8 0z" fill="#3a9ae8"/><path d="M18 19q4 3 8 0l-1 8q-4 3-8 0z" fill="#fcc62a"/></svg>'},
  btn(60,'ie',1), btn(122,'files',1), {x: 198, w: 32, h: pic('wmp')}, btn(246,'chrome',1), btn(308,'cmd',1), btn(370,'vs'), btn(432,'npp'), btn(494,'mon'), btn(556,'ansys'), btn(618,'mm',0,1),
  {x: 1733, w: 8, h: '<svg width="8" height="5"><path d="M0 5h8L4 0z" fill="#fff"/></svg>'},
  {x: 1754, w: 16, h: '<svg width="16" height="16"><path d="M1.500 1v15" stroke="#fff" stroke-width="1.600"/><path d="M3 2q3-1 5 1v6q-2-2-5-1zM9 4q3 1 5 0v6q-2 1-5 0z" fill="#fff"/></svg>'},
  {x: 1778, w: 16, h: '<svg width="16" height="16"><path d="M5.500 4.500h10v7h-10zM10 12v3M7 15.500h7M.5 1.500v3h4v-3M2.500 4v11h3" fill="none" stroke="#fff" stroke-width="1.400"/></svg>'},
  {x: 1803, w: 16, h: '<svg width="16" height="16"><path d="M1 5h3l4-4v14l-4-4H1z" fill="#fff"/><path d="M10 5q2 3 0 6M12.500 3q3 5 0 10" fill="none" stroke="#fff"/></svg>'},
  {x: 1834, w: 60, h: '<div class="flex flex-col items-center w-full gap-px"><span data-w="28">16:40</span><span data-w="58">04/08/2018</span></div>'},
  {x: 1905, w: 15, h: '<div class="w-[15px] h-[38px] border border-[#6f8fc0] bg-linear-to-b from-[#5878a8] to-[#1d3a70]"></div>'}]);

// Sets each label to its nominal width, independent of the installed font.
document.querySelectorAll('[data-w]').forEach(e => {
  const w = e.dataset.w, s = e.textContent;
  e.classList.add('block');
  e.innerHTML = `<svg class="block overflow-visible h-4" width="${w}" height="16"><text y="12" fill="currentColor" textLength="${w}"></text></svg>`;
  e.querySelector('text').textContent = s;
});
document.querySelectorAll('text[textLength]').forEach(t => t.setAttribute('lengthAdjust', 'spacingAndGlyphs'));
</script>
</body>
</html>
